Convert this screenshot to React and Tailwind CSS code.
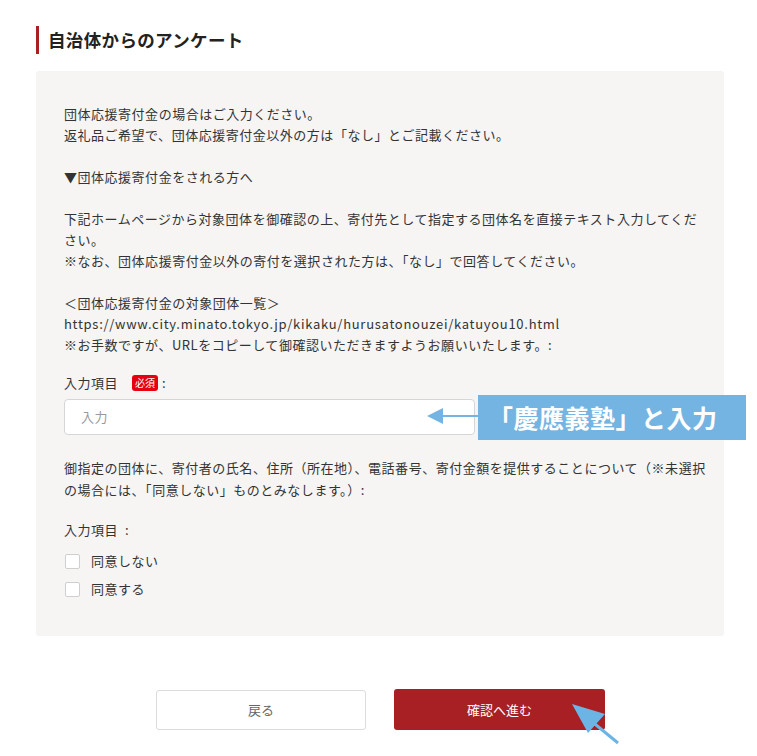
import React from "react";

const font = {
  fontFamily: '"Noto Sans CJK JP", "Noto Sans", sans-serif',
};

const Checkbox = ({ label }) => (
  <label className="flex items-center h-5 gap-[11px]">
    <span className="w-[15px] h-[15px] bg-white border border-[#cfcfcf] rounded-[2px] ml-px" />
    <span>{label}</span>
  </label>
);

export default function App() {
  return (
    <div
      className="relative w-[757px] h-[756px] bg-white text-[#333] overflow-hidden"
      style={font}
    >
      {/* heading */}
      <div className="flex items-center pt-[26px] pl-9">
        <span className="w-[3px] h-[28px] bg-[#a81f24]" />
        <h2 className="ml-[9px] text-[17.5px] font-bold text-[#222] tracking-[0.02em]">
          自治体からのアンケート
        </h2>
      </div>

      {/* panel */}
      <div className="mt-[17px] mx-9 w-[688px] bg-[#f6f5f3] rounded-[3px] pl-7 pr-[4px] pt-[32px] pb-[37px] text-[13px] tracking-[0.04em]">
        <div className="leading-[21px]">
          <p>
            団体応援寄付金の場合はご入力ください。
            <br />
            返礼品ご希望で、団体応援寄付金以外の方は「なし」とご記載ください。
          </p>
          <p className="mt-[21px]">▼団体応援寄付金をされる方へ</p>
          <p className="mt-[21px]">
            下記ホームページから対象団体を御確認の上、寄付先として指定する団体名を直接テキスト入力してくだ
            <br />
            さい。
            <br />
            ※なお、団体応援寄付金以外の寄付を選択された方は、「なし」で回答してください。
          </p>
          <p className="mt-[21px]">
            ＜団体応援寄付金の対象団体一覧＞
            <br />
            <span className="tracking-[0.055em]">
              https://www.city.minato.tokyo.jp/kikaku/hurusatonouzei/katuyou10.html
            </span>
            <br />
            ※お手数ですが、URLをコピーして御確認いただきますようお願いいたします。:
          </p>
        </div>

        <div className="mt-[18px] flex items-center h-5">
          <span>入力項目</span>
          <span className="ml-[14px] bg-[#e50012] text-white text-[10px] leading-none px-[3px] py-[3px] rounded-[3px] tracking-normal">
            必須
          </span>
          <span className="ml-[4px]">:</span>
        </div>
        <div className="mt-[6px] w-[411px] h-[36px] bg-white border border-[#d6d6d6] rounded-[4px] flex items-center px-4 text-[#999]">
          入力
        </div>

        <p className="mt-[22px] leading-[22px]">
          御指定の団体に、寄付者の氏名、住所（所在地）、電話番号、寄付金額を提供することについて（※未選択
          <br />
          の場合には、「同意しない」ものとみなします。）:
        </p>

        <div className="mt-[19px] h-5 flex items-center">入力項目&nbsp;&nbsp;:</div>
        <div className="mt-[11px] flex flex-col gap-2">
          <Checkbox label="同意しない" />
          <Checkbox label="同意する" />
        </div>
      </div>

      {/* buttons */}
      <div className="mt-[54px] flex justify-center gap-7 text-[13px] pl-[4px]">
        <button className="w-[210px] h-[40px] bg-white border border-[#dcdcdc] rounded-[3px] text-[#666]">
          戻る
        </button>
        <button className="w-[211px] h-[41px] -mt-px bg-[#a81f24] rounded-[3px] text-white">
          確認へ進む
        </button>
      </div>

      {/* callout */}
      <div className="absolute left-[478px] top-[395px] w-[268px] h-[45px] bg-[#74b4e2] flex items-center pl-[10px] text-white text-[25px] font-bold tracking-[0.02em]">
        「慶應義塾」と入力
      </div>
      <svg
        className="absolute left-[420px] top-[400px]"
        width="60"
        height="32"
        viewBox="0 0 60 32"
      >
        <line x1="20" y1="16" x2="60" y2="16" stroke="#74b4e2" strokeWidth="2" />
        <polygon points="7,16 23,8 23,24" fill="#74b4e2" />
      </svg>

      {/* pointer arrow */}
      <svg
        className="absolute left-[560px] top-[695px]"
        width="70"
        height="60"
        viewBox="0 0 70 60"
      >
        <line x1="30" y1="25" x2="58" y2="48" stroke="#6cb4e4" strokeWidth="3" />
        <polygon points="12,9 45,19 28,38" fill="#6cb4e4" />
      </svg>
    </div>
  );
}
